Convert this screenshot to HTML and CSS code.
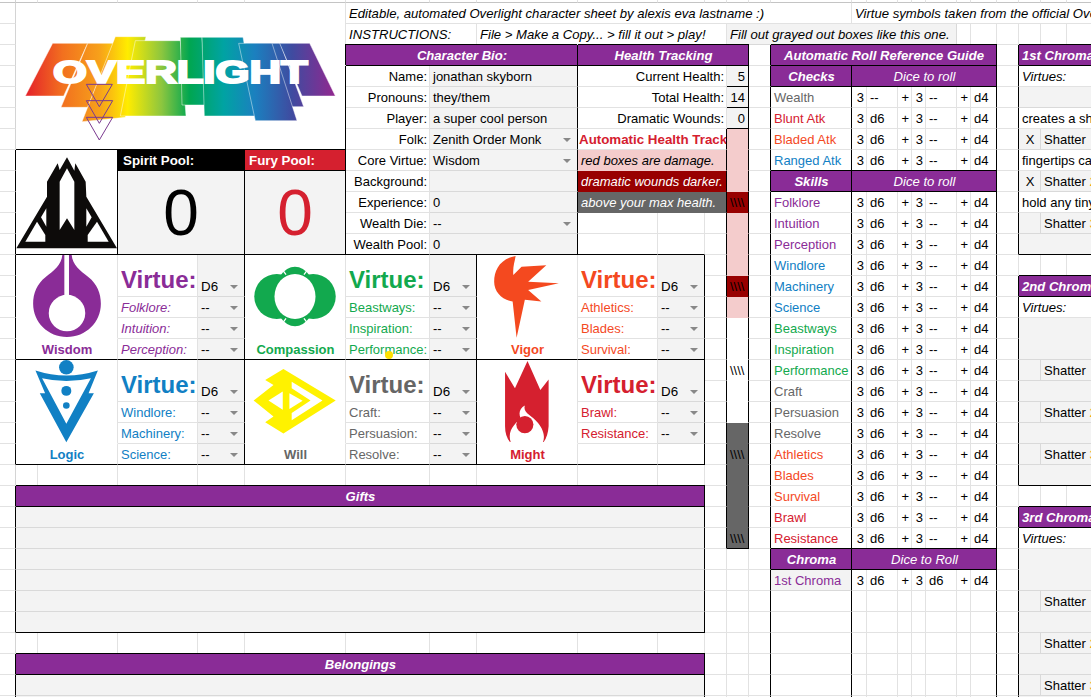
FILE: index.html
```html
<!DOCTYPE html>
<html lang="en">
<head>
    <meta charset="UTF-8">
    <title>Overlight character sheet</title>
    <link rel="stylesheet" href="styles.css">
</head>
<body>
<table class="sheet">
<colgroup>
    <col class="w16"><col class="w22"><col class="w80"><col class="w80"><col class="w47"><col class="w101">
    <col class="w84"><col class="w47"><col class="w101"><col class="w80"><col class="w47"><col class="w22">
    <col class="w22"><col class="w22"><col class="w81"><col class="w15"><col class="w31"><col class="w14">
    <col class="w14"><col class="w31"><col class="w14"><col class="w26"><col class="w22"><col class="w22">
    <col class="w26"><col class="w60">
</colgroup>
<tr class="sliver"><td class="gut"></td><td></td><td></td><td></td><td></td><td></td><td></td><td></td><td></td><td></td><td></td><td></td><td></td><td></td><td></td><td></td><td></td><td></td><td></td><td></td><td></td><td></td><td></td><td></td><td></td><td></td></tr>

<!-- top notes and logo -->
<tr>
    <td class="gut"></td>
    <td colspan="5" rowspan="7" class="pic bb">
        <svg class="logo" viewBox="47 9 987 438">
            <defs>
                <linearGradient id="rainbow" gradientUnits="userSpaceOnUse" x1="75" y1="0" x2="1005" y2="0">
                    <stop offset="0" stop-color="#e4202a"/>
                    <stop offset="0.12" stop-color="#f2701f"/>
                    <stop offset="0.24" stop-color="#f7a11a"/>
                    <stop offset="0.33" stop-color="#ffec00"/>
                    <stop offset="0.44" stop-color="#8cc63f"/>
                    <stop offset="0.53" stop-color="#00a651"/>
                    <stop offset="0.64" stop-color="#00a3a3"/>
                    <stop offset="0.74" stop-color="#1b80bf"/>
                    <stop offset="0.86" stop-color="#3f4ba0"/>
                    <stop offset="1" stop-color="#92278f"/>
                </linearGradient>
            </defs>
            <g fill="url(#rainbow)" stroke="#fff" stroke-opacity=".45" stroke-width="3">
                <polygon points="75,288 157,130 262,130 190,288"/>
                <polygon points="182,322 262,130 340,130 262,322"/>
                <polygon points="245,365 345,110 437,110 375,352"/>
                <polygon points="360,348 405,122 540,122 557,348"/>
                <polygon points="540,112 605,112 622,315 545,315"/>
                <polygon points="605,112 728,112 770,348 612,348"/>
                <polygon points="735,130 840,130 910,320 800,320"/>
                <polygon points="715,130 815,130 890,362 765,362"/>
                <polygon points="838,130 928,130 1005,288 905,288"/>
            </g>
            <text class="logo-word" x="158" y="249" textLength="764" lengthAdjust="spacingAndGlyphs">OVERLIGHT</text>
            <g fill="none" stroke="#7b3a90" stroke-width="3">
                <polygon points="258,253 336,253 297,320"/>
                <polygon points="258,302 337,302 297,370"/>
                <polygon points="258,352 337,352 297,420"/>
            </g>
        </svg>
    </td>
    <td colspan="9" class="note">Editable, automated Overlight character sheet by alexis eva lastname :)</td>
    <td colspan="11" class="note">Virtue symbols taken from the official Overlight rulebook</td>
</tr>
<tr>
    <td class="gut"></td>
    <td colspan="2" class="note">INSTRUCTIONS:</td>
    <td colspan="4" class="note">File &gt; Make a Copy... &gt; fill it out &gt; play!</td>
    <td colspan="8" class="note fill">Fill out grayed out boxes like this one.</td>
    <td></td><td></td><td></td><td></td><td></td><td></td>
</tr>

<!-- bio, health, roll guide, 1st chroma -->
<tr>
    <td class="gut"></td>
    <td colspan="3" class="hd tl">Character Bio:</td>
    <td colspan="4" class="hd tb">Health Tracking</td>
    <td class="br"></td>
    <td colspan="8" class="hd tb">Automatic Roll Reference Guide</td>
    <td class="br"></td>
    <td colspan="3" class="hd tb left">1st Chroma: Shatter</td>
</tr>
<tr>
    <td class="gut"></td>
    <td class="lab lb">Name:</td><td colspan="2" class="fill br">jonathan skyborn</td>
    <td colspan="3" class="lab">Current Health:</td><td class="fill rt hp bb br">5</td>
    <td class="br"></td>
    <td class="hd">Checks</td><td colspan="7" class="hd sub">Dice to roll</td>
    <td class="br"></td>
    <td colspan="3" class="note">Virtues:</td>
</tr>
<tr>
    <td class="gut"></td>
    <td class="lab lb">Pronouns:</td><td colspan="2" class="fill br">they/them</td>
    <td colspan="3" class="lab">Total Health:</td><td class="fill rt hp bb br">14</td>
    <td class="br"></td>
    <td class="br t-wil">Wealth</td>
    <td class="rt">3</td><td>--</td><td class="rt">+</td><td class="rt">3</td><td>--</td><td class="rt">+</td><td class="br">d4</td>
    <td class="br"></td>
    <td colspan="3" class="fill"></td>
</tr>
<tr>
    <td class="gut"></td>
    <td class="lab lb">Player:</td><td colspan="2" class="fill br">a super cool person</td>
    <td colspan="3" class="lab">Dramatic Wounds:</td><td class="fill rt hp bb br">0</td>
    <td class="br"></td>
    <td class="br t-mig">Blunt Atk</td>
    <td class="rt">3</td><td>d6</td><td class="rt">+</td><td class="rt">3</td><td>--</td><td class="rt">+</td><td class="br">d4</td>
    <td class="br"></td>
    <td colspan="3">creates a shard of light</td>
</tr>
<tr>
    <td class="gut"></td>
    <td class="lab lb">Folk:</td><td colspan="2" class="fill dd br">Zenith Order Monk</td>
    <td colspan="3" class="track br">Automatic Health Track</td><td class="pink br"></td>
    <td class="br"></td>
    <td class="br t-vig">Bladed Atk</td>
    <td class="rt">3</td><td>d6</td><td class="rt">+</td><td class="rt">3</td><td>--</td><td class="rt">+</td><td class="br">d4</td>
    <td class="br"></td>
    <td class="fill mid">X</td><td colspan="2" class="fill">Shatter</td>
</tr>
<tr>
    <td class="gut br"></td>
    <td colspan="2" rowspan="5" class="pic bb br">
        <svg class="spirit" viewBox="47 450 303 312">
            <path d="M200 472L222 512 225 490 256 545 258 590 350 745H48L140 590V545L172 490 178 510Z" fill="#0d0b0a"/>
            <g fill="#fff">
                <path d="M200 505L222 545V690L200 655 178 690V545Z"/>
                <path d="M138 625L122 652 138 680Z"/>
                <path d="M258 625L274 652 258 680Z"/>
                <path d="M75 725L110 665 135 705V725Z"/>
                <path d="M325 725L290 665 262 705V725Z"/>
            </g>
        </svg>
    </td>
    <td colspan="2" class="pool black bb br">Spirit Pool:</td>
    <td class="pool red bb br">Fury Pool:</td>
    <td class="lab">Core Virtue:</td><td colspan="2" class="fill dd br">Wisdom</td>
    <td colspan="3" class="pink ital br">red boxes are damage.</td><td class="pink br"></td>
    <td class="br"></td>
    <td class="br t-log">Ranged Atk</td>
    <td class="rt">3</td><td>d6</td><td class="rt">+</td><td class="rt">3</td><td>--</td><td class="rt">+</td><td class="br">d4</td>
    <td class="br"></td>
    <td colspan="3">fingertips can cut glass</td>
</tr>
<tr>
    <td class="gut br"></td>
    <td colspan="2" rowspan="4" class="fill big bb br">0</td>
    <td rowspan="4" class="fill big t-mig bb br">0</td>
    <td class="lab">Background:</td><td colspan="2" class="fill br"></td>
    <td colspan="3" class="dark ital br">dramatic wounds darker.</td><td class="pink br"></td>
    <td class="br"></td>
    <td class="hd tb">Skills</td><td colspan="7" class="hd sub tb">Dice to roll</td>
    <td class="br"></td>
    <td class="fill mid">X</td><td colspan="2" class="fill">Shatter <span class="t-orange">2</span></td>
</tr>
<tr>
    <td class="gut br"></td>
    <td class="lab">Experience:</td><td colspan="2" class="fill br">0</td>
    <td colspan="3" class="slate ital br">above your max health.</td><td class="dark hatch br">\\\\</td>
    <td class="br"></td>
    <td class="br t-wis">Folklore</td>
    <td class="rt">3</td><td>d6</td><td class="rt">+</td><td class="rt">3</td><td>--</td><td class="rt">+</td><td class="br">d4</td>
    <td class="br"></td>
    <td colspan="3">hold any tiny thing</td>
</tr>
<tr>
    <td class="gut br"></td>
    <td class="lab">Wealth Die:</td><td colspan="2" class="fill dd br">--</td>
    <td></td><td></td><td class="br"></td><td class="pink br"></td>
    <td class="br"></td>
    <td class="br t-wis">Intuition</td>
    <td class="rt">3</td><td>d6</td><td class="rt">+</td><td class="rt">3</td><td>--</td><td class="rt">+</td><td class="br">d4</td>
    <td class="br"></td>
    <td class="fill"></td><td colspan="2" class="fill">Shatter <span class="t-orange">3</span></td>
</tr>
<tr>
    <td class="gut br"></td>
    <td class="lab bb">Wealth Pool:</td><td colspan="2" class="fill bb br">0</td>
    <td class="bb"></td><td class="bb"></td><td class="br"></td><td class="pink br"></td>
    <td class="br"></td>
    <td class="br t-wis">Perception</td>
    <td class="rt">3</td><td>d6</td><td class="rt">+</td><td class="rt">3</td><td>--</td><td class="rt">+</td><td class="br">d4</td>
    <td class="br"></td>
    <td colspan="3" class="fill bb"></td>
</tr>

<!-- virtue panels, first row -->
<tr>
    <td class="gut br"></td>
    <td colspan="2" rowspan="4" class="pic nb">
        <svg class="icon" viewBox="47 15 303 250">
            <path d="M186 14C184 45 160 62 135 82 110 102 98 130 98 162 98 218 143 262 200 262 257 262 302 218 302 162 302 130 290 102 265 82 240 62 216 45 214 14Z" fill="#8a2c97"/>
            <rect x="192" y="10" width="14" height="135" fill="#fff"/>
            <circle cx="200" cy="190" r="55" fill="#fff"/>
        </svg>
    </td>
    <td rowspan="2" class="virtue t-wis">Virtue:</td><td rowspan="2" class="fill dd die br">D6</td>
    <td rowspan="4" class="pic nb">
        <svg class="icon" viewBox="734 15 302 250">
            <g fill="#12a94e">
                <circle cx="830" cy="140" r="68"/>
                <circle cx="940" cy="140" r="68"/>
                <ellipse cx="885" cy="140" rx="62" ry="90"/>
            </g>
            <ellipse cx="885" cy="140" rx="62" ry="68" fill="#fff"/>
            <path d="M846 58L858 74M924 58L912 74M846 222L858 206M924 222L912 206" stroke="#fff" stroke-width="4" fill="none"/>
        </svg>
    </td>
    <td rowspan="2" class="virtue t-com">Virtue:</td><td rowspan="2" class="fill dd die br">D6</td>
    <td rowspan="4" class="pic nb">
        <svg class="icon" viewBox="380 15 303 250">
            <path d="M497 17C494 36 488 50 490 75L515 50 590 45 535 95 628 100 535 120 575 155 525 150 500 265 488 155C455 150 432 125 432 95 432 60 450 25 497 17Z" fill="#f4491f"/>
        </svg>
    </td>
    <td rowspan="2" class="virtue t-vig">Virtue:</td><td rowspan="2" class="fill dd die br">D6</td>
    <td class="br"></td><td class="pink br"></td>
    <td class="br"></td>
    <td class="br t-log">Windlore</td>
    <td class="rt">3</td><td>d6</td><td class="rt">+</td><td class="rt">3</td><td>--</td><td class="rt">+</td><td class="br">d4</td>
    <td></td>
    <td></td><td></td><td></td>
</tr>
<tr>
    <td class="gut br"></td>
    <td class="br"></td><td class="dark hatch br">\\\\</td>
    <td class="br"></td>
    <td class="br t-log">Machinery</td>
    <td class="rt">3</td><td>d6</td><td class="rt">+</td><td class="rt">3</td><td>--</td><td class="rt">+</td><td class="br">d4</td>
    <td class="br"></td>
    <td colspan="3" class="hd tb left">2nd Chroma: Shatter</td>
</tr>
<tr>
    <td class="gut br"></td>
    <td class="t-wis ital">Folklore:</td><td class="fill dd br">--</td>
    <td class="t-com">Beastways:</td><td class="fill dd br">--</td>
    <td class="t-vig">Athletics:</td><td class="fill dd br">--</td>
    <td class="br"></td><td class="pink br"></td>
    <td class="br"></td>
    <td class="br t-log">Science</td>
    <td class="rt">3</td><td>d6</td><td class="rt">+</td><td class="rt">3</td><td>--</td><td class="rt">+</td><td class="br">d4</td>
    <td class="br"></td>
    <td colspan="3" class="note">Virtues:</td>
</tr>
<tr>
    <td class="gut br"></td>
    <td class="t-wis ital">Intuition:</td><td class="fill dd br">--</td>
    <td class="t-com">Inspiration:</td><td class="fill dd br">--</td>
    <td class="t-vig">Blades:</td><td class="fill dd br">--</td>
    <td class="br"></td><td class="blank br"></td>
    <td class="br"></td>
    <td class="br t-com">Beastways</td>
    <td class="rt">3</td><td>d6</td><td class="rt">+</td><td class="rt">3</td><td>--</td><td class="rt">+</td><td class="br">d4</td>
    <td class="br"></td>
    <td colspan="3" rowspan="2" class="fill"></td>
</tr>
<tr>
    <td class="gut br"></td>
    <td colspan="2" class="name t-wis bb">Wisdom</td>
    <td class="t-wis ital bb">Perception:</td><td class="fill dd bb br">--</td>
    <td class="name t-com bb">Compassion</td>
    <td class="t-com bb">Performance:</td><td class="fill dd bb br">--</td>
    <td class="name t-vig bb">Vigor</td>
    <td class="t-vig bb">Survival:</td><td class="fill dd bb br">--</td>
    <td class="br"></td><td class="blank br"></td>
    <td class="br"></td>
    <td class="br t-com">Inspiration</td>
    <td class="rt">3</td><td>d6</td><td class="rt">+</td><td class="rt">3</td><td>--</td><td class="rt">+</td><td class="br">d4</td>
    <td class="br"></td>
</tr>

<!-- virtue panels, second row -->
<tr>
    <td class="gut br"></td>
    <td colspan="2" rowspan="4" class="pic nb">
        <svg class="icon" viewBox="47 330 303 250">
            <g fill="#1180c4">
                <circle cx="198" cy="352" r="22"/>
                <circle cx="198" cy="423" r="15"/>
                <circle cx="198" cy="467" r="10"/>
                <path fill-rule="evenodd" d="M105 362Q198 392 293 362L265 430H281L198 578 118 430H134ZM125 385L198 522 272 385Q198 402 125 385Z"/>
            </g>
        </svg>
    </td>
    <td rowspan="2" class="virtue t-log">Virtue:</td><td rowspan="2" class="fill dd die br">D6</td>
    <td rowspan="4" class="pic nb">
        <svg class="icon" viewBox="734 330 302 250">
            <path d="M850 357L1008 452 850 552 795 518 820 500 760 452 820 405 795 390Z" fill="#fff200"/>
            <g fill="#fff">
                <path d="M805 452L848 425V480Z"/>
                <path d="M868 430L908 453 868 478Z"/>
                <path d="M875 395L968 452 875 512V490L932 452 875 415Z"/>
            </g>
        </svg>
    </td>
    <td rowspan="2" class="virtue t-wil">Virtue:</td><td rowspan="2" class="fill dd die br">D6</td>
    <td rowspan="4" class="pic nb">
        <svg class="icon" viewBox="380 330 303 250">
            <path d="M465 365L495 415 533 332 572 420 597 388V530Q595 560 582 578H480Q465 560 465 530Z" fill="#d5202f"/>
            <path d="M482 578C470 540 500 520 512 505 505 490 510 475 525 467 518 490 545 495 565 520 585 545 585 565 580 578Z" fill="#fff"/>
            <circle cx="525" cy="525" r="26" fill="#d5202f"/>
        </svg>
    </td>
    <td rowspan="2" class="virtue t-mig">Virtue:</td><td rowspan="2" class="fill dd die br">D6</td>
    <td class="br"></td><td class="blank br">\\\\</td>
    <td class="br"></td>
    <td class="br t-com">Performance</td>
    <td class="rt">3</td><td>d6</td><td class="rt">+</td><td class="rt">3</td><td>--</td><td class="rt">+</td><td class="br">d4</td>
    <td class="br"></td>
    <td class="fill"></td><td colspan="2" class="fill">Shatter</td>
</tr>
<tr>
    <td class="gut br"></td>
    <td class="br"></td><td class="blank br"></td>
    <td class="br"></td>
    <td class="br t-wil">Craft</td>
    <td class="rt">3</td><td>d6</td><td class="rt">+</td><td class="rt">3</td><td>--</td><td class="rt">+</td><td class="br">d4</td>
    <td class="br"></td>
    <td colspan="3" class="fill"></td>
</tr>
<tr>
    <td class="gut br"></td>
    <td class="t-log">Windlore:</td><td class="fill dd br">--</td>
    <td class="t-wil">Craft:</td><td class="fill dd br">--</td>
    <td class="t-mig">Brawl:</td><td class="fill dd br">--</td>
    <td class="br"></td><td class="blank br"></td>
    <td class="br"></td>
    <td class="br t-wil">Persuasion</td>
    <td class="rt">3</td><td>d6</td><td class="rt">+</td><td class="rt">3</td><td>--</td><td class="rt">+</td><td class="br">d4</td>
    <td class="br"></td>
    <td class="fill"></td><td colspan="2" class="fill">Shatter <span class="t-orange">2</span></td>
</tr>
<tr>
    <td class="gut br"></td>
    <td class="t-log">Machinery:</td><td class="fill dd br">--</td>
    <td class="t-wil">Persuasion:</td><td class="fill dd br">--</td>
    <td class="t-mig">Resistance:</td><td class="fill dd br">--</td>
    <td class="br"></td><td class="slate br"></td>
    <td class="br"></td>
    <td class="br t-wil">Resolve</td>
    <td class="rt">3</td><td>d6</td><td class="rt">+</td><td class="rt">3</td><td>--</td><td class="rt">+</td><td class="br">d4</td>
    <td class="br"></td>
    <td colspan="3" class="fill"></td>
</tr>
<tr>
    <td class="gut br"></td>
    <td colspan="2" class="name t-log bb">Logic</td>
    <td class="t-log bb">Science:</td><td class="fill dd bb br">--</td>
    <td class="name t-wil bb">Will</td>
    <td class="t-wil bb">Resolve:</td><td class="fill dd bb br">--</td>
    <td class="name t-mig bb">Might</td>
    <td class="bb"></td><td class="bb br"></td>
    <td class="br"></td><td class="slate hatch br">\\\\</td>
    <td class="br"></td>
    <td class="br t-vig">Athletics</td>
    <td class="rt">3</td><td>d6</td><td class="rt">+</td><td class="rt">3</td><td>--</td><td class="rt">+</td><td class="br">d4</td>
    <td class="br"></td>
    <td class="fill"></td><td colspan="2" class="fill">Shatter <span class="t-orange">3</span></td>
</tr>
<tr>
    <td class="gut"></td>
    <td></td><td></td><td></td><td></td><td></td><td></td><td></td><td></td><td></td><td></td>
    <td class="br"></td><td class="slate br"></td>
    <td class="br"></td>
    <td class="br t-vig">Blades</td>
    <td class="rt">3</td><td>d6</td><td class="rt">+</td><td class="rt">3</td><td>--</td><td class="rt">+</td><td class="br">d4</td>
    <td class="br"></td>
    <td colspan="3" class="fill bb"></td>
</tr>

<!-- gifts -->
<tr>
    <td class="gut br"></td>
    <td colspan="10" class="hd tb">Gifts</td>
    <td class="br"></td><td class="slate br"></td>
    <td class="br"></td>
    <td class="br t-vig">Survival</td>
    <td class="rt">3</td><td>d6</td><td class="rt">+</td><td class="rt">3</td><td>--</td><td class="rt">+</td><td class="br">d4</td>
    <td></td>
    <td></td><td></td><td></td>
</tr>
<tr>
    <td class="gut br"></td>
    <td colspan="10" class="fill br"></td>
    <td class="br"></td><td class="slate br"></td>
    <td class="br"></td>
    <td class="br t-mig">Brawl</td>
    <td class="rt">3</td><td>d6</td><td class="rt">+</td><td class="rt">3</td><td>--</td><td class="rt">+</td><td class="br">d4</td>
    <td class="br"></td>
    <td colspan="3" class="hd tb left">3rd Chroma: Shatter</td>
</tr>
<tr>
    <td class="gut br"></td>
    <td colspan="10" class="fill br"></td>
    <td class="br"></td><td class="slate hatch br bb">\\\\</td>
    <td class="br"></td>
    <td class="br t-mig">Resistance</td>
    <td class="rt">3</td><td>d6</td><td class="rt">+</td><td class="rt">3</td><td>--</td><td class="rt">+</td><td class="br">d4</td>
    <td class="br"></td>
    <td colspan="3" class="note">Virtues:</td>
</tr>
<tr>
    <td class="gut br"></td>
    <td colspan="10" class="fill br"></td>
    <td></td><td></td>
    <td class="br"></td>
    <td class="hd tb">Chroma</td><td colspan="7" class="hd sub tb">Dice to Roll</td>
    <td class="br"></td>
    <td colspan="3" rowspan="2" class="fill"></td>
</tr>
<tr>
    <td class="gut br"></td>
    <td colspan="10" class="fill br"></td>
    <td></td><td></td>
    <td class="br"></td>
    <td class="fill br t-wis">1st Chroma</td>
    <td class="rt">3</td><td>d6</td><td class="rt">+</td><td class="rt">3</td><td>d6</td><td class="rt">+</td><td class="br">d4</td>
    <td class="br"></td>
</tr>
<tr>
    <td class="gut br"></td>
    <td colspan="10" class="fill br"></td>
    <td></td><td></td>
    <td class="br"></td>
    <td class="br"></td>
    <td></td><td></td><td></td><td></td><td></td><td></td><td class="br"></td>
    <td class="br"></td>
    <td class="fill"></td><td colspan="2" class="fill">Shatter</td>
</tr>
<tr>
    <td class="gut br"></td>
    <td colspan="10" class="fill bb br"></td>
    <td></td><td></td>
    <td class="br"></td>
    <td class="br"></td>
    <td></td><td></td><td></td><td></td><td></td><td></td><td class="br"></td>
    <td class="br"></td>
    <td colspan="3" class="fill"></td>
</tr>
<tr>
    <td class="gut"></td>
    <td></td><td></td><td></td><td></td><td></td><td></td><td></td><td></td><td></td><td></td>
    <td></td><td></td>
    <td class="br"></td>
    <td class="br"></td>
    <td></td><td></td><td></td><td></td><td></td><td></td><td class="br"></td>
    <td class="br"></td>
    <td class="fill"></td><td colspan="2" class="fill">Shatter <span class="t-orange">2</span></td>
</tr>

<!-- belongings -->
<tr>
    <td class="gut br"></td>
    <td colspan="10" class="hd tb">Belongings</td>
    <td></td><td></td>
    <td class="br"></td>
    <td class="br"></td>
    <td></td><td></td><td></td><td></td><td></td><td></td><td class="br"></td>
    <td class="br"></td>
    <td colspan="3" class="fill"></td>
</tr>
<tr>
    <td class="gut br"></td>
    <td colspan="10" class="fill br"></td>
    <td></td><td></td>
    <td class="br"></td>
    <td class="br"></td>
    <td></td><td></td><td></td><td></td><td></td><td></td><td class="br"></td>
    <td class="br"></td>
    <td class="fill"></td><td colspan="2" class="fill">Shatter <span class="t-orange">3</span></td>
</tr>
<tr>
    <td class="gut br"></td>
    <td colspan="10" class="fill br"></td>
    <td></td><td></td>
    <td class="br"></td>
    <td class="br"></td>
    <td></td><td></td><td></td><td></td><td></td><td></td><td class="br"></td>
    <td class="br"></td>
    <td colspan="3" class="fill"></td>
</tr>
</table>
<span class="cursor-dot"></span>
</body>
</html>
```

FILE: styles.css
```css
html, body {
    margin: 0;
    padding: 0;
    height: 100%;
    overflow: hidden;
    background: #fff;
}

.sheet {
    table-layout: fixed;
    width: 1127px;
    border-collapse: separate;
    border-spacing: 0;
    font-family: "Liberation Sans", Arial, sans-serif;
    font-size: 13px;
    line-height: 16px;
    color: #000;
}

.w14 { width: 14px; }
.w15 { width: 15px; }
.w16 { width: 16px; }
.w22 { width: 22px; }
.w26 { width: 26px; }
.w31 { width: 31px; }
.w47 { width: 47px; }
.w60 { width: 60px; }
.w80 { width: 80px; }
.w81 { width: 81px; }
.w84 { width: 84px; }
.w101 { width: 101px; }

.sheet td {
    box-sizing: border-box;
    height: 21px;
    padding: 1px 2px 0 3px;
    border-right: 1px solid #e2e2e2;
    border-bottom: 1px solid #e2e2e2;
    white-space: nowrap;
    overflow: hidden;
    vertical-align: middle;
}

.sheet .sliver td {
    height: 3px;
    padding: 0;
    font-size: 0;
    line-height: 0;
    border-bottom-color: #c4c4c4;
}

.sheet td.gut { border-right-color: #d4d4d4; }

/* black rules: every cell owns its right and bottom edge */
.sheet td.br { border-right-color: #000; }
.sheet td.bb { border-bottom-color: #000; }
.sheet td.nb { border-bottom-color: #fff; }
.sheet td.lb { box-shadow: -1px 0 0 #000; }
.sheet td.tb { box-shadow: 0 -1px 0 #000; }
.sheet td.tl { box-shadow: -1px -1px 0 #000; }

.sheet td.fill {
    background: #f3f3f3;
    border-right-color: #d9d9d9;
    border-bottom-color: #d9d9d9;
}
.sheet td.fill.br { border-right-color: #000; }
.sheet td.fill.bb { border-bottom-color: #000; }

.sheet td.hd {
    background: #8a2c97;
    color: #fff;
    font-size: 13.1px;
    font-weight: 700;
    font-style: italic;
    text-align: center;
    border-right-color: #000;
    border-bottom-color: #000;
}
.sheet td.sub { font-weight: 400; }
.sheet td.left { text-align: left; }

.sheet td.note { font-size: 13.13px; font-style: italic; }
.ital { font-style: italic; }
.rt { text-align: right; }
.mid { text-align: center; }
.lab { text-align: right; }
.sheet td.hp { padding-right: 3px; }

.sheet td.track {
    padding-left: 1px;
    color: #d5202f;
    font-size: 13.33px;
    font-weight: 700;
}

.sheet td.pink {
    background: #f4cccc;
    border-bottom-color: #f4cccc;
}
.sheet td.dark {
    background: #980000;
    color: #fff;
    border-bottom-color: #980000;
}
.sheet td.slate {
    background: #666;
    color: #fff;
    border-bottom-color: #666;
}
.sheet td.hatch { color: #000; }
.sheet td.slate.bb { border-bottom-color: #000; }
.sheet td.blank { border-bottom-color: #fff; }

.sheet td.pic {
    padding: 0;
    vertical-align: top;
}
.icon, .logo, .spirit {
    display: block;
    width: 100%;
}
.spirit { height: 104px; }
.icon { height: 83px; }
.logo { height: 146px; }
.logo-word {
    font-family: "Liberation Sans", Arial, sans-serif;
    font-size: 96px;
    font-weight: 700;
    fill: #fff;
    stroke: #fff;
    stroke-width: 6;
}

.sheet td.pool {
    padding-left: 5px;
    color: #fff;
    font-size: 13.33px;
    font-weight: 700;
}
.sheet td.black { background: #000; }
.sheet td.red { background: #d5202f; padding-left: 4px; }

.sheet td.big {
    padding: 0;
    font-size: 64px;
    line-height: 70px;
    text-align: center;
}

.sheet td.virtue {
    padding-bottom: 2px;
    font-size: 24px;
    font-weight: 700;
    line-height: 28px;
    vertical-align: bottom;
    overflow: visible;
}
.sheet td.die {
    padding-bottom: 1px;
    font-size: 13.33px;
    vertical-align: bottom;
}
.name {
    font-weight: 700;
    text-align: center;
}

.dd::after {
    content: "";
    float: right;
    margin: 6px 4px 0 0;
    border-top: 4px solid #888;
    border-left: 4px solid transparent;
    border-right: 4px solid transparent;
}

.t-wis { color: #8a2c97; }
.t-com { color: #12a94e; }
.t-vig { color: #f4491f; }
.t-log { color: #1180c4; }
.t-wil { color: #666; }
.t-mig { color: #d5202f; }
.t-orange { color: #f39c12; }

.cursor-dot {
    position: absolute;
    left: 385px;
    top: 351px;
    width: 8px;
    height: 8px;
    border-radius: 50%;
    background: #ffe000;
}
```
